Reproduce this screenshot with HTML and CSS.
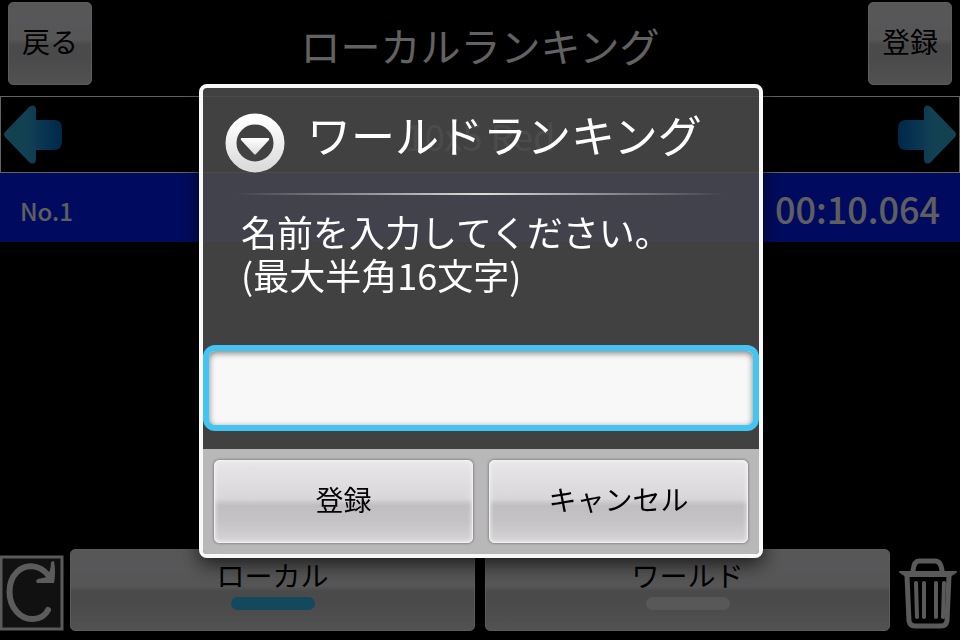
FILE: index.html
```html
<!DOCTYPE html>
<html lang="ja">
<head>
    <meta charset="UTF-8">
    <meta name="viewport" content="width=device-width, initial-scale=1.0">
    <title>ローカルランキング</title>
    <link rel="stylesheet" href="styles.css">
</head>
<body>
    <div class="screen">
        <header class="top-bar">
            <button type="button" class="btn btn-square">戻る</button>
            <h1>ローカルランキング</h1>
            <button type="button" class="btn btn-square">登録</button>
        </header>

        <div class="mode-bar">
            <button type="button" class="icon-btn" aria-label="前へ">
                <svg width="60" height="62" viewBox="0 0 60 62">
                    <defs>
                        <linearGradient id="arrow-fill" x1="0" x2="1">
                            <stop offset="0" stop-color="#30a8c8"/>
                            <stop offset="0.45" stop-color="#2ba0d0"/>
                            <stop offset="0.62" stop-color="#1c88d0"/>
                            <stop offset="1" stop-color="#0064b8"/>
                        </linearGradient>
                    </defs>
                    <path d="M1 28 25 3Q31-1 32 5V16H50Q58 16 58 25V37Q58 46 50 46H32V56Q31 62 25 58L1 33Q-1 30 1 28Z" fill="url(#arrow-fill)"/>
                </svg>
            </button>
            <span class="mode-name">10x5 Red</span>
            <button type="button" class="icon-btn flip" aria-label="次へ">
                <svg width="60" height="62" viewBox="0 0 60 62">
                    <path d="M1 28 25 3Q31-1 32 5V16H50Q58 16 58 25V37Q58 46 50 46H32V56Q31 62 25 58L1 33Q-1 30 1 28Z" fill="url(#arrow-fill)"/>
                </svg>
            </button>
        </div>

        <ol class="ranking">
            <li class="ranking-row">
                <span class="rank">No.1</span>
                <span class="time">00:10.064</span>
            </li>
        </ol>

        <footer class="bottom-bar">
            <button type="button" class="icon-btn" aria-label="更新">
                <svg width="64" height="76" viewBox="0 0 64 76">
                    <rect x="1" y="2" width="61" height="72" fill="#2c2c2c" stroke="#e0e0e0" stroke-width="3"/>
                    <path d="M48 55C43 65 27 68 17 57C7 46 7 27 17 17C26 8 40 10 48 20" fill="none" stroke="#e6e6e6" stroke-width="6" stroke-linecap="round"/>
                    <path d="M54 6Q56 17 54 28H37Q35 25 38 24L47 22Q51 15 51 7Z" fill="#e6e6e6"/>
                </svg>
            </button>
            <button type="button" class="btn btn-tab active">ローカル</button>
            <button type="button" class="btn btn-tab">ワールド</button>
            <button type="button" class="icon-btn" aria-label="削除">
                <svg width="64" height="76" viewBox="0 0 64 76" fill="none" stroke="#e0e0e0" stroke-linecap="round" stroke-linejoin="round">
                    <path d="M17 16Q18 6 23 6H39Q45 6 46 16" stroke-width="5"/>
                    <path d="M4 17H60L54 21H10Z" fill="#e0e0e0" stroke-width="2"/>
                    <path d="M11 21 13 66Q14 71 19 71H45Q50 71 51 66L53 21" stroke-width="5"/>
                    <path d="M20 28 21 62M28 28V62M40 28V62M48 28 47 62" stroke-width="4"/>
                </svg>
            </button>
        </footer>
    </div>

    <div class="overlay">
        <form class="dialog" role="dialog" aria-labelledby="dialog-title">
            <div class="dialog-title">
                <svg width="60" height="60" viewBox="0 0 60 60">
                    <defs>
                        <linearGradient id="ring" x1="0" y1="0" x2="0" y2="1">
                            <stop offset="0" stop-color="#fff"/>
                            <stop offset="1" stop-color="#dcdcdc"/>
                        </linearGradient>
                    </defs>
                    <circle cx="30" cy="30" r="24" fill="none" stroke="url(#ring)" stroke-width="11"/>
                    <path d="M17 25H43Q45 25 44 27L31 41Q30 42 29 41L16 27Q15 25 17 25Z" fill="url(#ring)"/>
                </svg>
                <h2 id="dialog-title">ワールドランキング</h2>
            </div>
            <label class="message" for="player-name">名前を入力してください。<br>(最大半角16文字)</label>
            <input type="text" id="player-name" class="name-input" maxlength="16">
            <div class="dialog-buttons">
                <button type="submit" class="btn">登録</button>
                <button type="button" class="btn">キャンセル</button>
            </div>
        </form>
    </div>
</body>
</html>
```
FILE: styles.css
```css
* { box-sizing: border-box; }
body {
    margin: 0;
    background-color: #000;
    color: #fff;
    font-family: "Noto Sans CJK JP", sans-serif;
}
h1, h2 { margin: 0; font-weight: 400; }

/* ranking screen */
.screen { display: flex; flex-direction: column; min-height: 100vh; }
.top-bar { display: flex; justify-content: space-between; padding: 2px 8px 11px; }
h1 { font-size: 40px; line-height: 86px; height: 83px; color: #f4f4f4; }

.btn {
    padding: 0 0 6px;
    border: 1px solid #e4e4e4;
    border-radius: 5px;
    background: linear-gradient(#dcdadd, #d8d6d9 45%, #bab8bb 52%, #bcbabd 70%, #cccccc);
    color: #000;
    font-family: inherit;
    font-size: 28px;
    line-height: 40px;
    cursor: pointer;
}
.btn-square { width: 84px; height: 83px; }
.icon-btn { display: flex; padding: 0; border: 0; background: none; cursor: pointer; }
.flip { transform: scaleX(-1); }

.mode-bar {
    display: flex;
    align-items: center;
    justify-content: space-between;
    height: 77px;
    padding: 0 3px;
    border: 1px solid #f8f8f8;
}
.mode-name { font-size: 36px; }

.ranking { flex: 1; margin: 0; padding: 0; list-style: none; }
.ranking-row {
    display: flex;
    align-items: center;
    justify-content: space-between;
    height: 69px;
    padding: 0 20px;
    background-color: #001cf0;
    color: #eee;
    font-weight: 500;
}
.rank { padding-top: 6px; font-size: 24px; }
.time { font-size: 36px; }

.bottom-bar { display: flex; align-items: flex-end; gap: 6px; padding-bottom: 9px; }
.btn-tab {
    display: flex;
    flex: 1;
    flex-direction: column;
    align-items: center;
    gap: 2px;
    height: 82px;
    padding-top: 5px;
}
.btn-tab.active { margin-right: 4px; }
.btn-tab::after {
    content: "";
    width: 84px;
    height: 13px;
    border-radius: 7px;
    background-color: #dcdcdc;
}
.btn-tab.active::after { background-color: #30b4e8; }

/* name dialog */
.overlay {
    position: fixed;
    inset: 0;
    display: flex;
    align-items: center;
    padding: 2px 197px 0 199px;
    background-color: rgba(0, 0, 0, .6);
}
.dialog {
    flex: 1;
    border: 4px solid #f8f8f8;
    border-radius: 8px;
    background-color: rgba(72, 72, 72, .9);
    box-shadow: 0 6px 20px rgba(0, 0, 0, .7);
    overflow: hidden;
}
.dialog-title {
    display: flex;
    align-items: center;
    gap: 22px;
    height: 107px;
    padding: 3px 22px 0;
    background: linear-gradient(90deg, transparent 6%, #ddd 50%, transparent 94%) bottom / 100% 2px no-repeat;
}
h2 { padding-bottom: 18px; font-size: 44px; line-height: 60px; }
.message {
    display: block;
    padding: 15px 38px 49px;
    font-size: 36px;
    line-height: 43px;
}
.name-input {
    display: block;
    width: 100%;
    height: 86px;
    padding: 0 20px;
    border: 6px solid #44c4f0;
    border-radius: 12px;
    outline: 0;
    background-color: #f8f8f8;
    box-shadow: inset 0 2px 6px rgba(0, 0, 0, .5);
    font-family: inherit;
    font-size: 36px;
}
.dialog-buttons {
    display: flex;
    gap: 16px;
    margin-top: 18px;
    padding: 11px;
    background-color: #b8b8b8;
}
.dialog-buttons .btn {
    flex: 1;
    height: 83px;
    border-color: #f0f0f0;
    background: linear-gradient(#e9e6ea, #d9d7da 46%, #c0bec1 55%, #c6c3c7 75%, #d6d4d7);
    box-shadow: inset 0 0 4px #f4f4f4, 0 0 3px rgba(0, 0, 0, .5);
}
```
